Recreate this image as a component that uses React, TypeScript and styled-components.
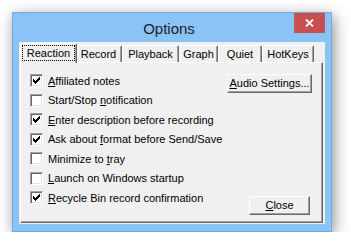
import styled, { createGlobalStyle } from "styled-components";

const GlobalStyle = createGlobalStyle`
  html, body {
    margin: 0;
    padding: 0;
    background: #ffffff;
  }
  body {
    font-family: "Liberation Sans", Arial, sans-serif;
    font-size: 11px;
    color: #000;
  }
`;

const Page = styled.div`
  padding: 12px 0 0 12px;
`;

const Window = styled.div`
  width: 320px;
  height: 220px;
  box-sizing: border-box;
  border: 1px solid #74a9da;
  background: #8ac4f7;
  box-shadow: 2px 4px 14px rgba(0, 0, 0, 0.45);
  display: flex;
  flex-direction: column;
`;

const TitleBar = styled.div`
  height: 29px;
  display: grid;
  grid-template-columns: 1fr auto 1fr;
  padding-right: 6px;
`;

const Title = styled.div`
  grid-column: 2;
  align-self: center;
  font-size: 15px;
  color: #1e1e1e;
  padding-top: 1px;
`;

const CloseBox = styled.div`
  grid-column: 3;
  justify-self: end;
  width: 31px;
  height: 20px;
  background: #c75050;
  display: flex;
  align-items: center;
  justify-content: center;
`;

const Client = styled.div`
  flex: 1;
  margin: 0 6px 7px 6px;
  background: #f0f0f0;
  padding: 1px 2px 1px 1px;
  display: flex;
  flex-direction: column;
`;

const TabStrip = styled.div`
  height: 19px;
  display: flex;
  align-items: flex-end;
  padding-left: 2px;
  position: relative;
  z-index: 1;
`;

const Tab = styled.div<{ $w: number; $active?: boolean }>`
  box-sizing: border-box;
  width: ${({ $w }) => $w}px;
  height: ${({ $active }) => ($active ? 20 : 17)}px;
  margin: ${({ $active }) => ($active ? "0 -2px -1px -2px" : "0")};
  position: relative;
  z-index: ${({ $active }) => ($active ? 2 : 1)};
  background: #f0f0f0;
  border-top: 1px solid #ffffff;
  border-left: 1px solid #ffffff;
  border-right: 1px solid #696969;
  border-top-left-radius: 2px;
  border-top-right-radius: 2px;
  box-shadow: inset -1px 0 #a0a0a0;
  display: flex;
  justify-content: center;
  padding: ${({ $active }) => ($active ? "1px 1px 2px 1px" : "2px 0 0 0")};
  line-height: 13px;
`;

const Focus = styled.div`
  flex: 1;
  border: 1px dotted #000;
  text-align: center;
  line-height: 14px;
`;

const Panel = styled.div`
  flex: 1;
  border: 1px solid;
  border-color: #ffffff #696969 #696969 #ffffff;
  box-shadow: inset -1px -1px #a0a0a0;
  display: flex;
  padding: 8px 10px 7px 9px;
`;

const OptionList = styled.div`
  flex: 1;
  display: flex;
  flex-direction: column;
`;

const Row = styled.label`
  height: 19.5px;
  display: flex;
  align-items: center;
  gap: 5px;
  white-space: nowrap;
`;

const Box = styled.span`
  box-sizing: border-box;
  width: 13px;
  height: 13px;
  flex: none;
  background: #fff;
  border: 1px solid;
  border-color: #a0a0a0 #ffffff #ffffff #a0a0a0;
  box-shadow: inset 1px 1px #696969, inset -1px -1px #e3e3e3;
  display: flex;
  padding: 2px;
`;

const Side = styled.div`
  display: flex;
  flex-direction: column;
  justify-content: space-between;
  align-items: flex-end;
  padding-top: 3px;
`;

const Button = styled.div<{ $w: number; $nudge?: number }>`
  box-sizing: border-box;
  width: ${({ $w }) => $w}px;
  height: 19px;
  margin-right: ${({ $nudge }) => $nudge ?? 0}px;
  border: 1px solid;
  border-color: #ffffff #696969 #696969 #ffffff;
  box-shadow: inset -1px -1px #a0a0a0;
  display: flex;
  align-items: center;
  justify-content: center;
  padding-bottom: 1px;
`;

const Key = styled.span`
  text-decoration: underline;
  text-underline-offset: 1px;
`;

const Check = () => (
  <svg width="7" height="7" viewBox="0 0 7 7" shapeRendering="crispEdges">
    <path
      d="M0 2h1v3H0zM1 3h1v3H1zM2 4h1v3H2zM3 3h1v3H3zM4 2h1v3H4zM5 1h1v3H5zM6 0h1v3H6z"
      fill="#000"
    />
  </svg>
);

const CloseGlyph = () => (
  <svg width="9" height="8" viewBox="0 0 9 8">
    <path d="M1 0.5L8 7.5M8 0.5L1 7.5" stroke="#fff" strokeWidth="1.8" />
  </svg>
);

const tabs = [
  { name: "Reaction", w: 57, active: true },
  { name: "Record", w: 47 },
  { name: "Playback", w: 57 },
  { name: "Graph", w: 39 },
  { name: "Quiet", w: 44 },
  { name: "HotKeys", w: 52 },
];

const options: { pre: string; key: string; post: string; on: boolean }[] = [
  { pre: "", key: "A", post: "ffiliated notes", on: true },
  { pre: "Start/Stop ", key: "n", post: "otification", on: false },
  { pre: "", key: "E", post: "nter description before recording", on: true },
  { pre: "Ask about ", key: "f", post: "ormat before Send/Save", on: true },
  { pre: "Minimize to ", key: "t", post: "ray", on: false },
  { pre: "", key: "L", post: "aunch on Windows startup", on: false },
  { pre: "", key: "R", post: "ecycle Bin record confirmation", on: true },
];

export default function App() {
  return (
    <Page>
      <GlobalStyle />
      <Window>
        <TitleBar>
          <Title>Options</Title>
          <CloseBox>
            <CloseGlyph />
          </CloseBox>
        </TitleBar>
        <Client>
          <TabStrip>
            {tabs.map((t) =>
              t.active ? (
                <Tab key={t.name} $w={t.w} $active>
                  <Focus>{t.name}</Focus>
                </Tab>
              ) : (
                <Tab key={t.name} $w={t.w}>
                  {t.name}
                </Tab>
              )
            )}
          </TabStrip>
          <Panel>
            <OptionList>
              {options.map((o) => (
                <Row key={o.pre + o.key + o.post}>
                  <Box>{o.on && <Check />}</Box>
                  <span>
                    {o.pre}
                    <Key>{o.key}</Key>
                    {o.post}
                  </span>
                </Row>
              ))}
            </OptionList>
            <Side>
              <Button $w={85}>
                <span>
                  <Key>A</Key>udio Settings...
                </span>
              </Button>
              <Button $w={61} $nudge={2}>
                <span>
                  <Key>C</Key>lose
                </span>
              </Button>
            </Side>
          </Panel>
        </Client>
      </Window>
    </Page>
  );
}
